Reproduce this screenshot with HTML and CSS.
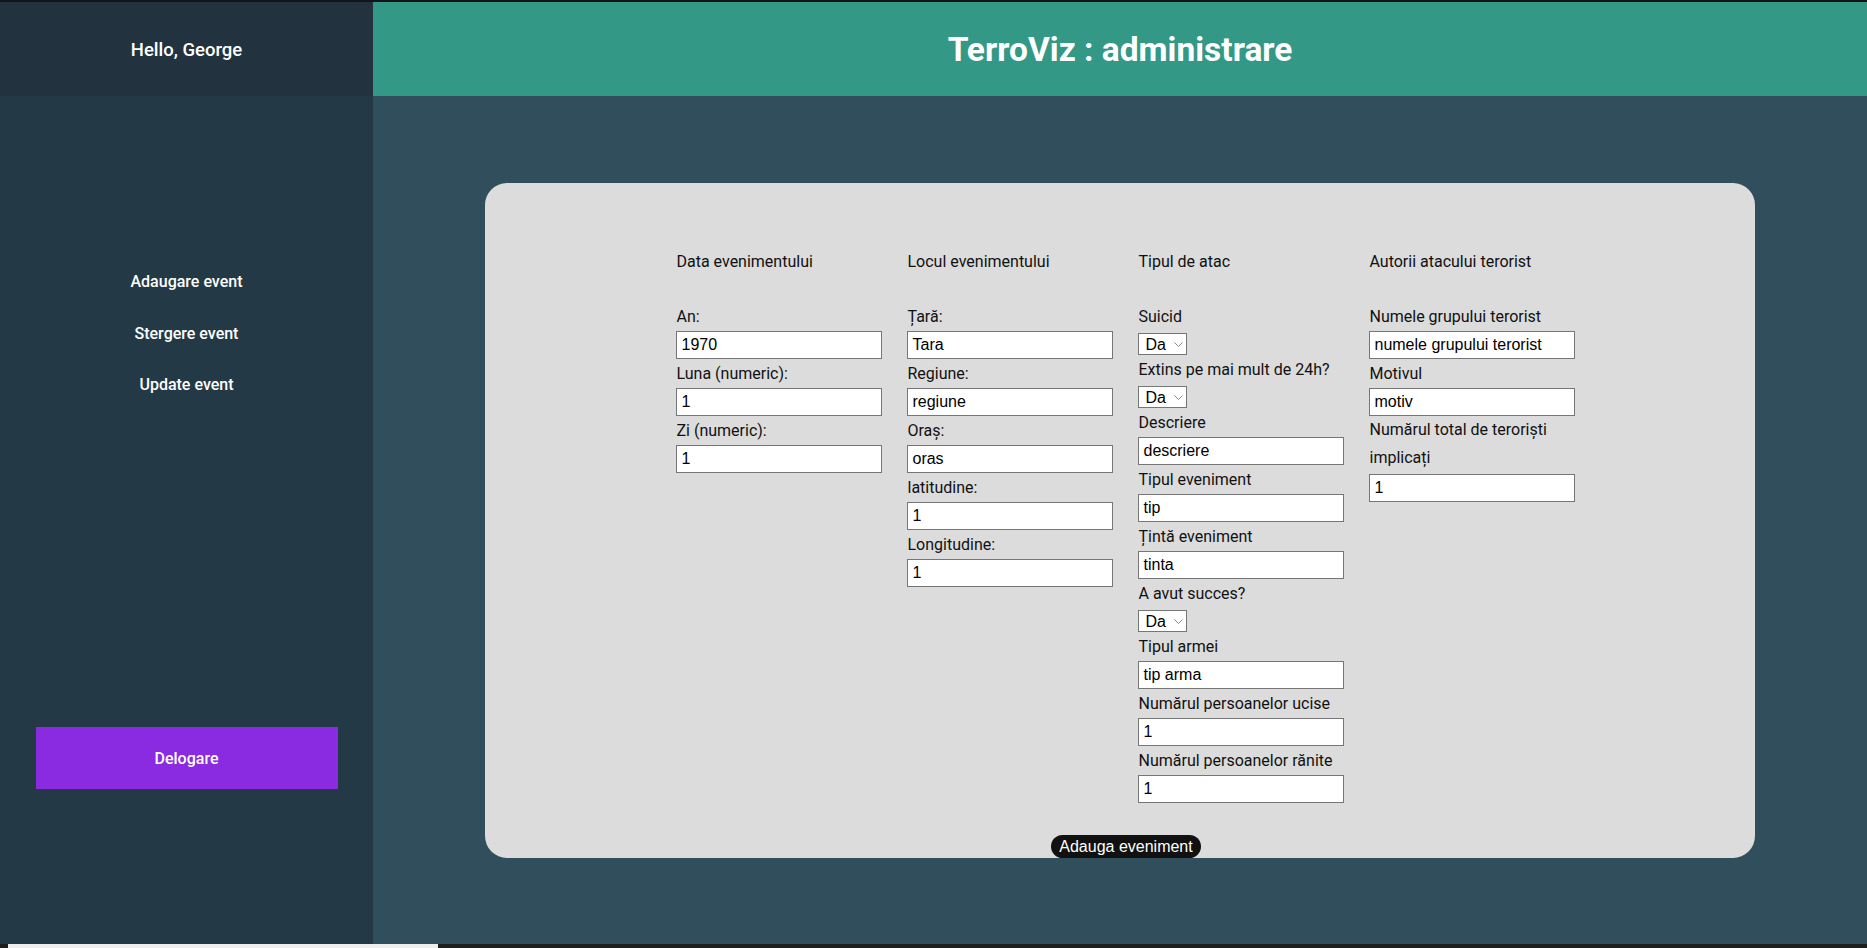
FILE: index.html
```html
<!DOCTYPE html>
<html lang="ro">
<head>
<meta charset="utf-8">
<title>TerroViz : administrare</title>
<link rel="stylesheet" href="styles.css">
</head>
<body>
<div class="top-strip"></div>
<div class="app">
  <div class="brand">Hello, George</div>
  <header class="topbar"><h1 class="title">TerroViz : administrare</h1></header>
  <aside class="sidebar">
    <nav class="nav">
      <a class="nav-link" href="#">Adaugare event</a>
      <a class="nav-link" href="#">Stergere event</a>
      <a class="nav-link" href="#">Update event</a>
    </nav>
    <button class="logout" type="button">Delogare</button>
  </aside>
  <main class="content">
    <form class="card">
      <div class="columns">
        <div class="col">
          <h2 class="col-title">Data evenimentului</h2>
          <label class="lbl">An:</label>
          <input class="field" type="text" value="1970">
          <label class="lbl">Luna (numeric):</label>
          <input class="field" type="text" value="1">
          <label class="lbl">Zi (numeric):</label>
          <input class="field" type="text" value="1">
        </div>
        <div class="col">
          <h2 class="col-title">Locul evenimentului</h2>
          <label class="lbl">Țară:</label>
          <input class="field" type="text" value="Tara">
          <label class="lbl">Regiune:</label>
          <input class="field" type="text" value="regiune">
          <label class="lbl">Oraș:</label>
          <input class="field" type="text" value="oras">
          <label class="lbl">latitudine:</label>
          <input class="field" type="text" value="1">
          <label class="lbl">Longitudine:</label>
          <input class="field" type="text" value="1">
        </div>
        <div class="col">
          <h2 class="col-title">Tipul de atac</h2>
          <label class="lbl">Suicid</label>
          <span class="select-wrap">
            <select class="choice"><option>Da</option><option>Nu</option></select>
            <svg class="chev" viewBox="0 0 9 5" aria-hidden="true"><path d="M0.5 0.5 L4.5 4.5 L8.5 0.5" fill="none" stroke="#8a8a8a" stroke-width="1"/></svg>
          </span>
          <label class="lbl">Extins pe mai mult de 24h?</label>
          <span class="select-wrap">
            <select class="choice"><option>Da</option><option>Nu</option></select>
            <svg class="chev" viewBox="0 0 9 5" aria-hidden="true"><path d="M0.5 0.5 L4.5 4.5 L8.5 0.5" fill="none" stroke="#8a8a8a" stroke-width="1"/></svg>
          </span>
          <label class="lbl">Descriere</label>
          <input class="field" type="text" value="descriere">
          <label class="lbl">Tipul eveniment</label>
          <input class="field" type="text" value="tip">
          <label class="lbl">Țintă eveniment</label>
          <input class="field" type="text" value="tinta">
          <label class="lbl">A avut succes?</label>
          <span class="select-wrap">
            <select class="choice"><option>Da</option><option>Nu</option></select>
            <svg class="chev" viewBox="0 0 9 5" aria-hidden="true"><path d="M0.5 0.5 L4.5 4.5 L8.5 0.5" fill="none" stroke="#8a8a8a" stroke-width="1"/></svg>
          </span>
          <label class="lbl">Tipul armei</label>
          <input class="field" type="text" value="tip arma">
          <label class="lbl">Numărul persoanelor ucise</label>
          <input class="field" type="text" value="1">
          <label class="lbl">Numărul persoanelor rănite</label>
          <input class="field" type="text" value="1">
        </div>
        <div class="col">
          <h2 class="col-title">Autorii atacului terorist</h2>
          <label class="lbl">Numele grupului terorist</label>
          <input class="field" type="text" value="numele grupului terorist">
          <label class="lbl">Motivul</label>
          <input class="field" type="text" value="motiv">
          <label class="lbl lbl-wrap">Numărul total de teroriști implicați</label>
          <input class="field" type="text" value="1">
        </div>
      </div>
      <button class="submit" type="button">Adauga eveniment</button>
    </form>
  </main>
</div>
<div class="bottom-strip"><div class="thumb"></div></div>
</body>
</html>
```
FILE: styles.css
```css
html, body {
  margin: 0;
  padding: 0;
}
body {
  background: #121619;
  font-family: Roboto, "Liberation Sans", sans-serif;
  overflow: hidden;
}
.top-strip {
  height: 2px;
  background: #111518;
}
.app {
  display: grid;
  grid-template-columns: 373px 1fr;
  grid-template-rows: 94px 848px;
}
.brand {
  background: #22333f;
  color: #fff;
  font-size: 18.5px;
  font-weight: 500;
  display: flex;
  align-items: center;
  justify-content: center;
  padding-top: 2px;
  box-sizing: border-box;
}
.topbar {
  background: #349887;
  display: flex;
  align-items: center;
  justify-content: center;
  padding-top: 2px;
  box-sizing: border-box;
}
.title {
  margin: 0;
  color: #fff;
  font-size: 33.5px;
  font-weight: 700;
  line-height: 1;
}
.sidebar {
  background: #243946;
  display: flex;
  flex-direction: column;
  align-items: center;
  padding-top: 174px;
}
.nav {
  display: flex;
  flex-direction: column;
  align-items: center;
  gap: 27.5px;
}
.nav-link {
  color: #fff;
  text-decoration: none;
  font-size: 16px;
  font-weight: 500;
  line-height: 24px;
}
.logout {
  margin-top: 330px;
  width: 302px;
  height: 62px;
  border: 0;
  background: #8a2be2;
  color: #fff;
  font-family: Roboto, "Liberation Sans", sans-serif;
  font-size: 16px;
  font-weight: 500;
}
.content {
  background: #314e5c;
  padding-top: 87px;
}
.card {
  width: 85%;
  height: 675px;
  box-sizing: border-box;
  margin: 0 auto;
  background: #dcdcdc;
  border-radius: 22px;
  padding: 64px 0 0 12px;
  display: flex;
  flex-direction: column;
  align-items: center;
}
.columns {
  display: flex;
  justify-content: center;
  align-items: flex-start;
  gap: 25px;
  flex: 1;
}
.col {
  width: 206px;
  display: flex;
  flex-direction: column;
  align-items: flex-start;
}
.col-title {
  margin: 0 0 26px;
  font-size: 16px;
  font-weight: 400;
  line-height: 29px;
  color: #111;
}
.lbl {
  display: block;
  font-size: 16px;
  line-height: 29px;
  color: #111;
}
.lbl-wrap {
  line-height: 27.5px;
  margin-bottom: 3px;
}
.field {
  display: block;
  width: 206px;
  height: 28px;
  box-sizing: border-box;
  margin: 0;
  border: 1px solid #767676;
  background: #fff;
  padding: 1px 4px;
  font-family: "Liberation Sans", Arial, sans-serif;
  font-size: 16px;
  color: #000;
}
.select-wrap {
  position: relative;
  display: block;
  margin-top: 2px;
  height: 22px;
}
.choice {
  display: block;
  -webkit-appearance: none;
  appearance: none;
  width: 49px;
  height: 22px;
  box-sizing: border-box;
  margin: 0;
  padding: 0 0 0 6px;
  font-family: "Liberation Sans", Arial, sans-serif;
  font-size: 16px;
  color: #000;
  background: #fff;
  border: 1px solid #767676;
  border-radius: 0;
}
.chev {
  position: absolute;
  left: 36px;
  top: 9px;
  width: 9px;
  height: 5px;
  pointer-events: none;
}
.submit {
  height: 23px;
  padding: 0 8px;
  border: 0;
  border-radius: 12px;
  background: #111;
  color: #fff;
  font-family: "Liberation Sans", Arial, sans-serif;
  font-size: 16px;
  line-height: 23px;
}
.bottom-strip {
  height: 4px;
  background: #1e1e1e;
  padding-left: 8px;
}
.thumb {
  width: 430px;
  height: 4px;
  background: #eeeeee;
}
```
